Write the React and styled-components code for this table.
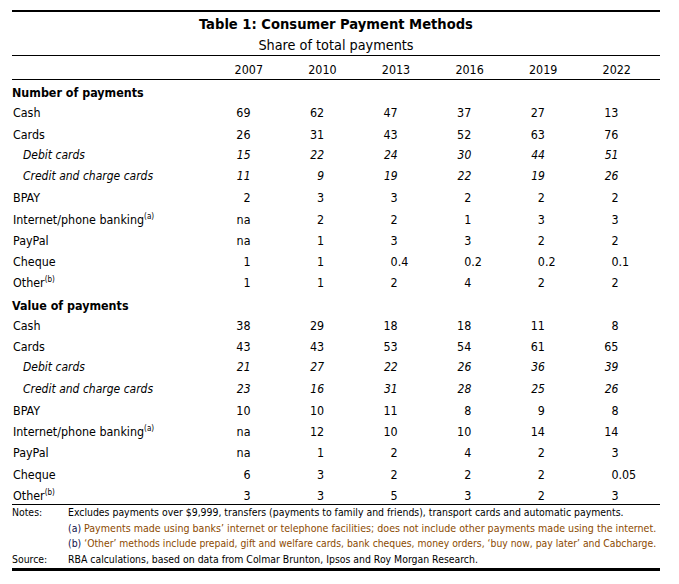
import React from 'react';
import styled, { createGlobalStyle } from 'styled-components';

const Global = createGlobalStyle`
  html, body { margin: 0; padding: 0; background: #fff; }
  body {
    font-family: "DejaVu Sans Condensed", "DejaVu Sans", sans-serif;
    color: #000;
    -webkit-font-smoothing: antialiased;
  }
`;

const Page = styled.div`
  padding: 10px 19px 0 12px;
  width: 648px;
`;

const Table = styled.div`
  border-top: 2px solid #000;
  border-bottom: 3px solid #000;
`;

const Title = styled.div`
  font-size: 14.6px;
  font-weight: bold;
  text-align: center;
  line-height: 23px;
`;

const Subtitle = styled.div`
  font-size: 14.3px;
  text-align: center;
  line-height: 20px;
  border-bottom: 1px solid #000;
`;

const Grid = styled.div`
  display: grid;
  grid-template-columns: 200px repeat(6, 73.6px) 1fr;
  font-size: ${(p) => (p.$italic ? '12px' : '12.4px')};
  font-style: ${(p) => (p.$italic ? 'italic' : 'normal')};
  height: 21.25px;
  line-height: 21.25px;
`;

const HeadRow = styled(Grid)`
  height: 19px;
  line-height: 19px;
  padding-top: 4px;
  border-bottom: 1px solid #000;
`;

const Year = styled.div`
  text-align: center;
`;

const Section = styled.div`
  font-size: 12.4px;
  font-weight: bold;
  height: 21.25px;
  line-height: 21.25px;
  padding-top: 1px;
  box-sizing: border-box;
`;

const Label = styled.div`
  padding-left: ${(p) => (p.$indent ? '11px' : '1px')};
  white-space: nowrap;
`;

const Sup = styled.sup`
  font-size: 8px;
  font-style: normal;
  vertical-align: 5px;
  line-height: 0;
`;

const Num = styled.div`
  display: flex;
  white-space: nowrap;
`;

const Int = styled.span`
  width: 38.5px;
  text-align: right;
  flex: none;
`;

const Body = styled.div`
  padding-top: 1px;
  height: 425px;
  box-sizing: border-box;
  border-bottom: 1px solid #000;
`;

const Notes = styled.div`
  display: grid;
  grid-template-columns: 56px 1fr;
  font-size: 10.4px;
  line-height: 15.7px;
  white-space: nowrap;
`;

const Tag = styled.span`
  color: #10104a;
`;

const NoteText = styled.span`
  color: #8c4a00;
  font-size: ${(p) => p.$size || '10.6px'};
`;

const years = ['2007', '2010', '2013', '2016', '2019', '2022'];

const numberRows = [
  { label: 'Cash', v: ['69', '62', '47', '37', '27', '13'] },
  { label: 'Cards', v: ['26', '31', '43', '52', '63', '76'] },
  { label: 'Debit cards', sub: true, v: ['15', '22', '24', '30', '44', '51'] },
  { label: 'Credit and charge cards', sub: true, v: ['11', '9', '19', '22', '19', '26'] },
  { label: 'BPAY', v: ['2', '3', '3', '2', '2', '2'] },
  { label: 'Internet/phone banking', sup: '(a)', v: ['na', '2', '2', '1', '3', '3'] },
  { label: 'PayPal', v: ['na', '1', '3', '3', '2', '2'] },
  { label: 'Cheque', v: ['1', '1', '0.4', '0.2', '0.2', '0.1'] },
  { label: 'Other', sup: '(b)', v: ['1', '1', '2', '4', '2', '2'] },
];

const valueRows = [
  { label: 'Cash', v: ['38', '29', '18', '18', '11', '8'] },
  { label: 'Cards', v: ['43', '43', '53', '54', '61', '65'] },
  { label: 'Debit cards', sub: true, v: ['21', '27', '22', '26', '36', '39'] },
  { label: 'Credit and charge cards', sub: true, v: ['23', '16', '31', '28', '25', '26'] },
  { label: 'BPAY', v: ['10', '10', '11', '8', '9', '8'] },
  { label: 'Internet/phone banking', sup: '(a)', v: ['na', '12', '10', '10', '14', '14'] },
  { label: 'PayPal', v: ['na', '1', '2', '4', '2', '3'] },
  { label: 'Cheque', v: ['6', '3', '2', '2', '2', '0.05'] },
  { label: 'Other', sup: '(b)', v: ['3', '3', '5', '3', '2', '3'] },
];

function Value({ v }) {
  const i = v.indexOf('.');
  const intPart = i >= 0 ? v.slice(0, i) : v;
  const frac = i >= 0 ? v.slice(i) : '';
  return (
    <Num>
      <Int>{intPart}</Int>
      <span>{frac}</span>
    </Num>
  );
}

function DataRow({ row }) {
  return (
    <Grid $italic={row.sub}>
      <Label $indent={row.sub}>
        {row.label}
        {row.sup && <Sup>{row.sup}</Sup>}
      </Label>
      {row.v.map((v, k) => (
        <Value key={k} v={v} />
      ))}
    </Grid>
  );
}

export default function App() {
  return (
    <>
      <Global />
      <Page>
        <Table>
          <Title>Table 1: Consumer Payment Methods</Title>
          <Subtitle>Share of total payments</Subtitle>
          <HeadRow>
            <div />
            {years.map((y) => (
              <Year key={y}>{y}</Year>
            ))}
          </HeadRow>
          <Body>
            <Section>Number of payments</Section>
            {numberRows.map((r, k) => (
              <DataRow key={k} row={r} />
            ))}
            <Section>Value of payments</Section>
            {valueRows.map((r, k) => (
              <DataRow key={k} row={r} />
            ))}
          </Body>
          <Notes>
            <span>Notes:</span>
            <span>
              Excludes payments over $9,999, transfers (payments to family and friends), transport cards and automatic payments.
            </span>
            <span />
            <span>
              <Tag>(a)</Tag>{' '}
              <NoteText>
                Payments made using banks’ internet or telephone facilities; does not include other payments made using the internet.
              </NoteText>
            </span>
            <span />
            <span>
              <Tag>(b)</Tag>{' '}
              <NoteText $size="10.3px">
                ‘Other’ methods include prepaid, gift and welfare cards, bank cheques, money orders, ‘buy now, pay later’ and Cabcharge.
              </NoteText>
            </span>
            <span>Source:</span>
            <span>RBA calculations, based on data from Colmar Brunton, Ipsos and Roy Morgan Research.</span>
          </Notes>
        </Table>
      </Page>
    </>
  );
}
